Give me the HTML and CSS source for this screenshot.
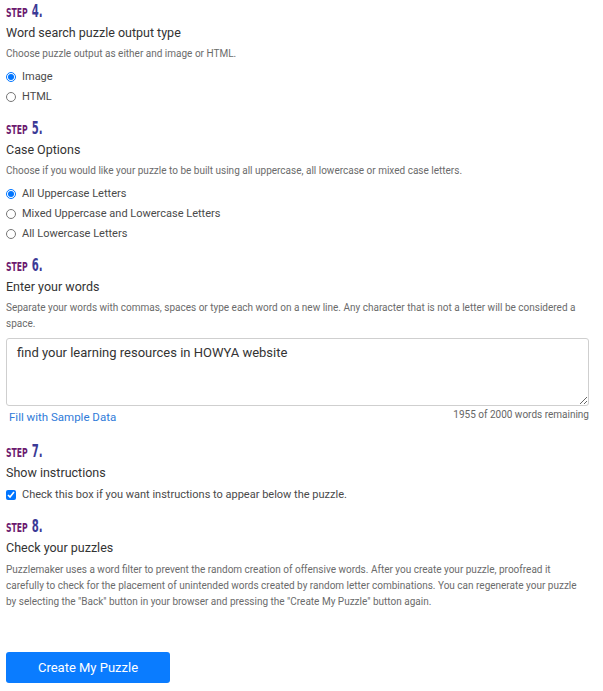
FILE: index.html
```html
<!DOCTYPE html>
<html>
<head>
    <title>Word Search Maker</title>
    <link rel="stylesheet" href="styles.css">
</head>
<body>
<form class="maker">
    <div class="step">
        <div class="stepTitle"><span class="stepWord">STEP</span> <span class="stepNum">4.</span></div>
        <div class="stepLabel">Word search puzzle output type</div>
        <div class="stepDesc">Choose puzzle output as either and image or HTML.</div>
        <label class="option"><input type="radio" name="output" checked> Image</label>
        <label class="option"><input type="radio" name="output"> HTML</label>
    </div>

    <div class="step">
        <div class="stepTitle"><span class="stepWord">STEP</span> <span class="stepNum">5.</span></div>
        <div class="stepLabel">Case Options</div>
        <div class="stepDesc">Choose if you would like your puzzle to be built using all uppercase, all lowercase or mixed case letters.</div>
        <label class="option"><input type="radio" name="case" checked> All Uppercase Letters</label>
        <label class="option"><input type="radio" name="case"> Mixed Uppercase and Lowercase Letters</label>
        <label class="option"><input type="radio" name="case"> All Lowercase Letters</label>
    </div>

    <div class="step">
        <div class="stepTitle"><span class="stepWord">STEP</span> <span class="stepNum">6.</span></div>
        <div class="stepLabel">Enter your words</div>
        <div class="stepDesc">Separate your words with commas, spaces or type each word on a new line. Any character that is not a letter will be considered a space.</div>
        <textarea class="words" spellcheck="false">find your learning resources in HOWYA website</textarea>
        <div class="wordsFoot">
            <a href="#" class="sample">Fill with Sample Data</a>
            <span class="remaining">1955 of 2000 words remaining</span>
        </div>
    </div>

    <div class="step">
        <div class="stepTitle"><span class="stepWord">STEP</span> <span class="stepNum">7.</span></div>
        <div class="stepLabel">Show instructions</div>
        <label class="option single"><input type="checkbox" checked> Check this box if you want instructions to appear below the puzzle.</label>
    </div>

    <div class="step">
        <div class="stepTitle"><span class="stepWord">STEP</span> <span class="stepNum">8.</span></div>
        <div class="stepLabel">Check your puzzles</div>
        <div class="stepDesc long">Puzzlemaker uses a word filter to prevent the random creation of offensive words. After you create your puzzle, proofread it carefully to check for the placement of unintended words created by random letter combinations. You can regenerate your puzzle by selecting the "Back" button in your browser and pressing the "Create My Puzzle" button again.</div>
    </div>

    <button type="button" class="create">Create My Puzzle</button>
</form>
</body>
</html>
```

FILE: styles.css
```css
html, body {
    padding: 0px;
    margin: 0px;
    background-color: #FFF;
    font-family: Roboto, "Liberation Sans", sans-serif;
    color: #333;
}

.maker {
    width: 583px;
    padding: 1px 6px 0px 6px;
}

.step {
    margin-bottom: 11px;
}

/* condensed display face for the step numbers */
.stepTitle {
    font-family: "DejaVu Sans", sans-serif;
    font-stretch: condensed;
    font-weight: bold;
    font-size: 16px;
    height: 20px;
    line-height: 20px;
    transform: scaleX(0.66);
    transform-origin: left center;
    white-space: nowrap;
}
.stepWord {
    color: #6c1b6f;
    font-size: 13px;
}
.stepNum {
    color: #3b3a96;
    font-size: 17px;
    margin-left: 1px;
}

.stepLabel {
    font-size: 12.5px;
    line-height: 20px;
    margin-top: 2px;
    color: #333;
}

.stepDesc {
    font-size: 10px;
    line-height: 16px;
    color: #6b6b6b;
    margin-top: 3px;
    margin-bottom: 5px;
}
.stepDesc.long {
    margin-top: 4px;
    margin-bottom: 0px;
}

.option {
    display: flex;
    align-items: center;
    font-size: 11px;
    color: #4a4a4a;
    height: 20px;
    line-height: 20px;
}
.option.single {
    margin-top: 2px;
}
.option input {
    margin: 0px 6px 0px 0px;
    width: 10px;
    height: 10px;
}

.words {
    display: block;
    box-sizing: border-box;
    width: 583px;
    height: 68px;
    margin-top: 6px;
    padding: 6px 10px;
    border: 1px solid #cfcfcf;
    border-radius: 3px;
    font-family: Roboto, "Liberation Sans", sans-serif;
    font-size: 13px;
    color: #333;
    resize: vertical;
}

.wordsFoot {
    display: flex;
    justify-content: space-between;
    align-items: flex-start;
    margin-top: 3px;
    margin-bottom: 16px;
    height: 16px;
}
.sample {
    color: #2f7bd9;
    font-size: 11.5px;
    line-height: 16px;
    text-decoration: none;
    margin-left: 3px;
}
.remaining {
    font-size: 10px;
    line-height: 12px;
    color: #666;
}

.create {
    display: block;
    margin-top: 42px;
    width: 164px;
    height: 31px;
    border: none;
    border-radius: 3px;
    background-color: #0a7cff;
    color: #FFF;
    font-family: Roboto, "Liberation Sans", sans-serif;
    font-size: 13px;
}
```
